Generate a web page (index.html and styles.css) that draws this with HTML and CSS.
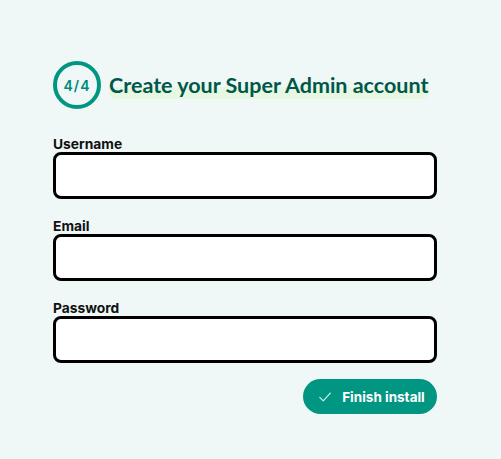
FILE: index.html
```html
<!DOCTYPE html>
<html>
<head>
<meta charset="utf-8">
<link rel="stylesheet" href="styles.css">
</head>
<body>
<main class="page">
  <header class="step-head">
    <div class="step-badge">4/4</div>
    <h1 class="step-title"><span class="mark">Create your Super Admin account</span></h1>
  </header>
  <form class="form">
    <label class="field">
      <span class="field-label">Username</span>
      <input class="field-input" type="text">
    </label>
    <label class="field">
      <span class="field-label">Email</span>
      <input class="field-input" type="email">
    </label>
    <label class="field">
      <span class="field-label">Password</span>
      <input class="field-input" type="password">
    </label>
    <div class="actions">
      <button class="btn" type="button">
        <svg class="btn-icon" viewBox="0 0 16 16" width="14" height="14"><path d="M2 8.5l4 4 8-9" fill="none" stroke="#cfeee8" stroke-width="1.4" stroke-linecap="round" stroke-linejoin="round"/></svg>
        <span>Finish install</span>
      </button>
    </div>
  </form>
</main>
</body>
</html>
```
FILE: styles.css
```css
html, body {
  margin: 0;
  padding: 0;
}
body {
  background: #eff8f6;
  font-family: Inter, "Liberation Sans", sans-serif;
  width: 501px;
  height: 459px;
  overflow: hidden;
}
.page {
  padding: 61px 0 0 53px;
  width: 384px;
}
.step-head {
  display: flex;
  align-items: center;
  gap: 8px;
}
.step-badge {
  width: 40px;
  height: 40px;
  border: 4px solid #009682;
  border-radius: 50%;
  display: flex;
  align-items: center;
  justify-content: center;
  color: #00897b;
  font-weight: 600;
  font-size: 14px;
  letter-spacing: 1px;
  flex: none;
}
.step-title {
  margin: 0;
  font-family: Lato, sans-serif;
  font-weight: 700;
  font-size: 21.5px;
  line-height: 26px;
  color: #00574a;
}
.mark {
  display: inline-block;
  background: linear-gradient(to bottom, transparent 54%, #e6f7e2 54%);
  border-radius: 0 0 7px 7px;
  padding: 0 1px 1px 0;
}
.form {
  margin-top: 27px;
  display: flex;
  flex-direction: column;
}
.field {
  display: flex;
  flex-direction: column;
  margin-bottom: 19px;
}
.field-label {
  font-size: 13.8px;
  font-weight: 700;
  color: #111;
  line-height: 16px;
  margin-bottom: 0;
}
.field-input {
  box-sizing: border-box;
  height: 47px;
  border: 3px solid #000;
  border-radius: 8px;
  background: #fff;
  margin: 0;
}
.actions {
  display: flex;
  justify-content: flex-end;
  margin-top: -3px;
}
.btn {
  height: 35px;
  width: 134px;
  border: none;
  border-radius: 18px;
  background: #009682;
  color: #fff;
  font-family: Inter, sans-serif;
  font-weight: 700;
  font-size: 13.5px;
  display: flex;
  align-items: center;
  justify-content: center;
  gap: 10px;
  padding: 0 0 0 3px;
}
```
